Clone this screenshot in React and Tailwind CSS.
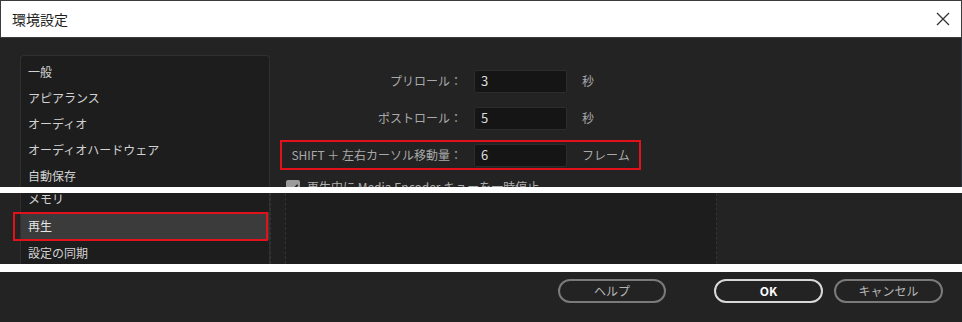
import React from 'react';

const FONT = { fontFamily: '"Noto Sans CJK JP", "Noto Sans", sans-serif' };

const TOP_ITEMS = ['一般', 'アピアランス', 'オーディオ', 'オーディオハードウェア', '自動保存'];

// Label / input rows on the 再生 page
const ROWS = [
  { label: 'プリロール：', value: '3', unit: '秒', mark: false },
  { label: 'ポストロール：', value: '5', unit: '秒', mark: false },
  { label: 'SHIFT ＋ 左右カーソル移動量：', value: '6', unit: 'フレーム', mark: true },
];

function Row({ label, value, unit, mark }) {
  return (
    <div
      className={`flex items-center shrink-0 h-[30px] w-[361px] border-[2.5px] ${
        mark ? 'border-[#e3111a]' : 'border-transparent'
      }`}
    >
      <span className="w-[182px] pr-[2px] text-right text-[12px] text-[#a9a9a9] whitespace-nowrap">{label}</span>
      <div className="ml-[10px] w-[93px] h-[23px] bg-[#151515] border border-[#2c2c2c] rounded-[2px] flex items-center pl-[6px] text-[13px] text-[#dcdcdc]">
        {value}
      </div>
      <span className="ml-[15px] text-[12px] text-[#a9a9a9]">{unit}</span>
    </div>
  );
}

function Strip({ h }) {
  return <div className={`bg-white w-full shrink-0 ${h}`} />;
}

export default function App() {
  return (
    <div className="w-[962px] h-[322px] overflow-hidden bg-white flex flex-col" style={FONT}>
      {/* Part 1: title bar + upper list and fields */}
      <div className="h-[187px] shrink-0 flex flex-col overflow-hidden">
        <div className="h-[38px] shrink-0 bg-white border border-[#3c3c3c] flex items-center justify-between pl-[11px] pr-[10px]">
          <span className="text-[14px] text-[#1e1e1e]">環境設定</span>
          <svg width="16" height="16" viewBox="0 0 16 16" className="text-[#333]">
            <path d="M2 2 L14 14 M14 2 L2 14" stroke="currentColor" strokeWidth="1.3" fill="none" />
          </svg>
        </div>
        <div className="flex-1 min-h-0 overflow-hidden bg-[#232323] flex items-start pl-[20px] border-r border-[#2d3440]">
          <div className="mt-[17px] w-[250px] shrink-0 bg-[#1d1d1d] border-x border-t border-[#303030] rounded-t-[4px] pt-[3px] pl-[7px]">
            {TOP_ITEMS.map((item) => (
              <div key={item} className="h-[26px] flex items-center text-[12px] text-[#d2d2d2]">
                {item}
              </div>
            ))}
          </div>
          <div className="ml-[10px] pt-[28px] flex flex-col gap-[7px]">
            {ROWS.map((r) => (
              <Row key={r.label} {...r} />
            ))}
            <div className="flex items-center shrink-0 h-[18px] pl-[6px] mt-[1px] gap-[7px]">
              <div className="w-[14px] h-[14px] rounded-[2px] bg-[#9b9b9b] flex items-center justify-center">
                <svg width="11" height="11" viewBox="0 0 12 12">
                  <path d="M2 6.5 L5 9.5 L10.5 3" stroke="#222" strokeWidth="1.8" fill="none" />
                </svg>
              </div>
              <span className="text-[12px] text-[#b0b0b0] whitespace-nowrap">再生中に Media Encoder キューを一時停止</span>
            </div>
          </div>
        </div>
      </div>

      <Strip h="h-[6px]" />

      {/* Part 2: lower list with 再生 selected */}
      <div className="h-[71px] shrink-0 bg-[#232323] flex overflow-hidden">
        <div className="ml-[20px] w-[250px] bg-[#1d1d1d] border-x border-[#303030] -mt-[7px] pl-[7px]">
          <div className="h-[26px] flex items-center text-[12px] text-[#d2d2d2]">メモリ</div>
          <div className="relative -ml-[7px] h-[28px] flex items-center pl-[7px] bg-[#3b3b3b] text-[12px] text-[#e6e6e6]">
            再生
            <div className="absolute -left-[8px] right-[1px] top-0 -bottom-[1px] border-[2.5px] border-[#e3111a]" />
          </div>
          <div className="h-[26px] flex items-center text-[12px] text-[#d2d2d2]">設定の同期</div>
        </div>
        <div className="w-[15px] border-l border-dashed border-[#343434] bg-[#202020]" />
        <div className="w-[432px] bg-[#1d1d1d] border-x border-dashed border-[#333]" />
        <div className="flex-1 bg-[#232323]" />
      </div>

      <Strip h="h-[8px]" />

      {/* Part 3: buttons */}
      <div className="flex-1 bg-[#232323] flex items-start justify-end pt-[7px] pr-[19px]">
        <button className="w-[108px] h-[24px] rounded-full border-2 border-[#7a7a7a] text-[12px] text-[#b5b5b5] flex items-center justify-center">
          ヘルプ
        </button>
        <button className="ml-[48px] w-[109px] h-[24px] rounded-full border-2 border-[#d8d8d8] text-[12px] font-bold text-white flex items-center justify-center">
          OK
        </button>
        <button className="ml-[11px] w-[109px] h-[24px] rounded-full border-2 border-[#7a7a7a] text-[12px] text-[#b5b5b5] flex items-center justify-center">
          キャンセル
        </button>
      </div>
    </div>
  );
}
